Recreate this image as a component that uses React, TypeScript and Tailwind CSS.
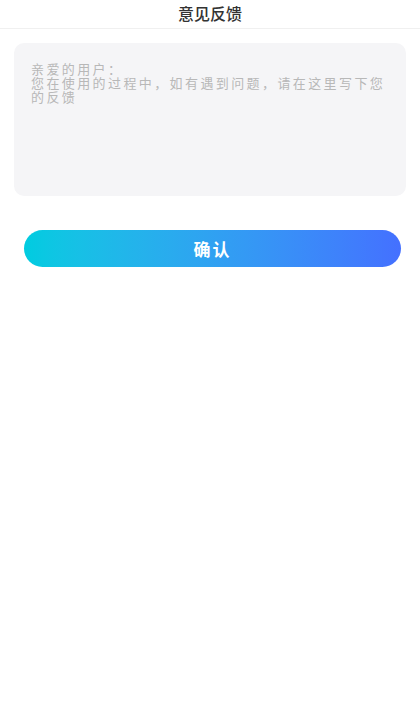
import React from 'react';

const font = { fontFamily: '"Noto Sans CJK SC", "Noto Sans", sans-serif' };

export default function App() {
  return (
    <div className="min-h-[706px] w-full bg-white" style={font}>
      <header className="flex h-[29px] items-center justify-center border-b border-[#f0f0f0]">
        <h1 className="-mt-[3px] text-[16px] font-medium leading-none text-[#333333]">意见反馈</h1>
      </header>

      <div className="px-[14px] pt-[14px]">
        <textarea
          className="block h-[153px] w-full resize-none overflow-hidden rounded-[10px] bg-[#f5f5f7] pl-[17px] pr-[10px] pt-[19px] text-[13px] leading-[14px] tracking-[2.4px] text-[#666] outline-none placeholder:text-[#b8b8b8]"
          placeholder={'亲爱的用户：\n您在使用的过程中，如有遇到问题，请在这里写下您的反馈'}
        />
      </div>

      <div className="px-[24px] pt-[34px] pr-[19px]">
        <button className="flex h-[37px] w-full items-center justify-center rounded-full bg-gradient-to-r from-[#00cce0] to-[#4470ff] text-[17px] font-bold tracking-[2px] text-white">
          确认
        </button>
      </div>
    </div>
  );
}
